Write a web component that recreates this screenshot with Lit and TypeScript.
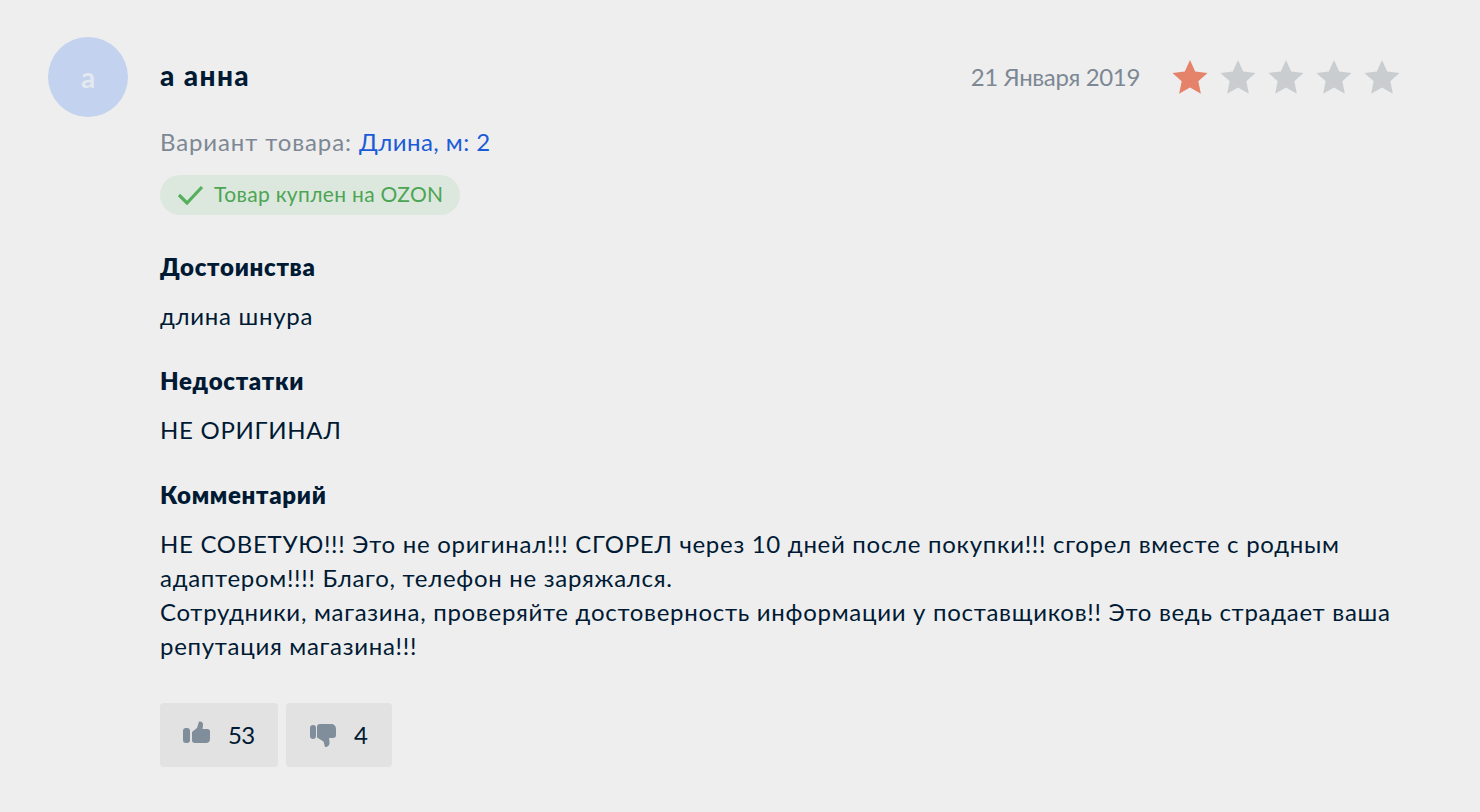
import { LitElement, html, css } from "lit";
import { customElement } from "lit/decorators.js";

const star = (fill: string) => html`<svg class="star" viewBox="0 0 36 36"><path fill=${fill} d="M18 1l5.200 11.600 12.300 1.300-9.200 8.400 2.600 12.400L18 28.400 7.100 34.700l2.600-12.400L.5 13.900l12.300-1.300z"/></svg>`;

@customElement("app-root")
export class AppRoot extends LitElement {
  static styles = css`
    :host { display: block; width: 1480px; height: 812px; background: #eeeeee; font-family: Lato, "Noto Sans", sans-serif; color: #001a34; overflow: hidden; }
    .page { box-sizing: border-box; height: 812px; padding: 37px 80px 0 48px; display: flex; gap: 32px; }
    .avatar { flex: none; width: 80px; height: 80px; border-radius: 50%; background: #c3d2ee; color: #e4e8ef; display: flex; align-items: center; justify-content: center; font-size: 28px; font-weight: 700; }
    .main { flex: 1; min-width: 0; }
    .head { display: flex; align-items: center; height: 80px; }
    .name { flex: 1; font-size: 28px; font-weight: 900; letter-spacing: 1.400px; margin-top: -4px; }
    .date { font-size: 24px; color: #7d8894; letter-spacing: -.35px; margin-right: 32px; margin-top: -2px; }
    .stars { display: flex; gap: 12px; }
    .star { width: 36px; height: 36px; display: block; }
    .variant { margin-top: 8px; height: 34px; line-height: 34px; font-size: 24px; letter-spacing: .88px; color: #7d8894; }
    .variant span { color: #1a5bd8; letter-spacing: .45px; }
    .badge { margin-top: 16px; width: 300px; height: 40px; box-sizing: border-box; padding-left: 17px; border-radius: 20px; background: #dce8de; color: #4ca553; display: flex; align-items: center; gap: 10px; font-size: 21px; letter-spacing: .32px; padding-bottom: 4px; }
    .badge svg { width: 27px; height: 20px; margin-top: 4px; }
    h3 { margin: 35px 0 0; font-size: 24px; line-height: 34px; font-weight: 800; letter-spacing: .7px; }
    h3.next { margin-top: 31px; }
    p { margin: 15px 0 0; font-size: 24px; line-height: 34px; letter-spacing: .71px; }
    .votes { display: flex; gap: 8px; margin-top: 40px; }
    .vote { height: 64px; border-radius: 4px; background: #e2e2e3; display: flex; align-items: center; font-size: 24px; box-sizing: border-box; padding-left: 23px; gap: 18px; }
    .vote.up { width: 118px; letter-spacing: -.7px; }
    .vote.down { width: 106px; }
    .vote span { margin-top: -2px; }
    .vote svg { width: 27px; height: 26px; }
    .vote.up svg { margin-top: -4px; }
    .vote.down svg { margin-left: 1px; margin-right: -1px; }
  `;
  render() {
    return html`<div class="page">
      <div class="avatar">а</div>
      <div class="main">
        <div class="head">
          <div class="name">а анна</div>
          <div class="date">21 Января 2019</div>
          <div class="stars">${star("#e5836a")}${star("#c9cdd0")}${star("#c9cdd0")}${star("#c9cdd0")}${star("#c9cdd0")}</div>
        </div>
        <div class="variant">Вариант товара: <span>Длина, м: 2</span></div>
        <div class="badge"><svg viewBox="0 0 27 20"><path d="M2 10l8 8L25 2" fill="none" stroke="#55b05c" stroke-width="3.200"/></svg>Товар куплен на OZON</div>
        <h3>Достоинства</h3>
        <p>длина шнура</p>
        <h3 class="next">Недостатки</h3>
        <p>НЕ ОРИГИНАЛ</p>
        <h3 class="next">Комментарий</h3>
        <p>НЕ СОВЕТУЮ!!! Это не оригинал!!! СГОРЕЛ через 10 дней после покупки!!! сгорел вместе с родным адаптером!!!! Благо, телефон не заряжался.<br>Сотрудники, магазина, проверяйте достоверность информации у поставщиков!! Это ведь страдает ваша репутация магазина!!!</p>
        <div class="votes">
          <div class="vote up"><svg viewBox="0 0 27 26"><rect x="0" y="8" width="7" height="15" rx="3" fill="#808d9a"/><path fill="#808d9a" d="M9 12l5-4 2-6.500c3-.5 4.500 1.500 4 4L19.500 9h5c1.500 0 2.500 1 2.500 2.500V19c0 2.500-1.500 4-4 4H12c-2 0-3-1-3-2.500z"/></svg><span>53</span></div>
          <div class="vote down"><svg viewBox="0 0 27 26"><rect x="0" y="3" width="6" height="14" rx="3" fill="#808d9a"/><path fill="#808d9a" d="M7 5c0-2 1-3 3-3h11c3 0 5 2 5 5v6c0 2-1 3-3 3h-4l.5 4c.3 3-1.500 5-4.500 5l-1.500-5.500L7 15.500z"/></svg><span>4</span></div>
        </div>
      </div>
    </div>`;
  }
}
